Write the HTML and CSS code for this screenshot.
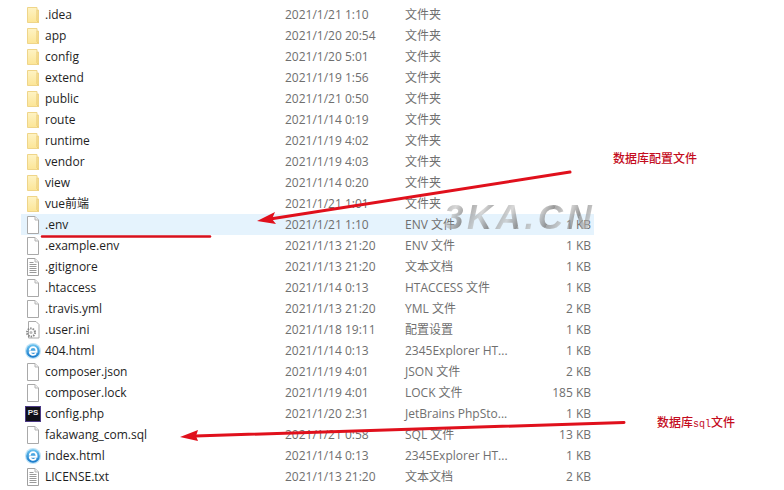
FILE: index.html
```html
<!DOCTYPE html>
<html lang="en">
<head>
  <meta charset="UTF-8">
  <title>Files</title>
  <link rel="stylesheet" href="styles.css">
</head>
<body>
  <!-- shared file icons -->
  <svg class="defs" width="0" height="0">
    <defs>
      <linearGradient id="folder-fill" x1="0" y1="0" x2="0" y2="1">
        <stop offset="0" stop-color="#fef3c4"/>
        <stop offset="1" stop-color="#fce596"/>
      </linearGradient>
      <linearGradient id="ie-fill" x1="0" y1="0" x2="0" y2="1">
        <stop offset="0" stop-color="#6cc4f0"/>
        <stop offset="1" stop-color="#1677c9"/>
      </linearGradient>
      <symbol id="folder" viewBox="0 0 16 18">
        <path d="M2.500 1.500h9.500v2.500h1.500v12.500h-11z" fill="url(#folder-fill)" stroke="#efd589"/>
        <path d="M12 4v10.500l1.500 2" fill="none" stroke="#e8c76c"/>
      </symbol>
      <symbol id="page" viewBox="0 0 16 18">
        <path d="M2.500 .5h7.500l3.500 3.500v13.500h-11z" fill="#fff" stroke="#a9a9a9"/>
        <path d="M10 .5v3.500h3.500" fill="#f1f1f1" stroke="#b5b5b5"/>
      </symbol>
      <symbol id="text-page" viewBox="0 0 16 18">
        <path d="M2.500 .5h7.500l3.500 3.500v13.500h-11z" fill="#fff" stroke="#a0a0a0"/>
        <path d="M10 .5v3.500h3.500" fill="#f1f1f1" stroke="#b5b5b5"/>
        <path d="M4.500 4.500h4M4.500 6.500h7M4.500 8.500h7M4.500 10.500h7M4.500 12.500h7M4.500 14.500h7" stroke="#999"/>
      </symbol>
      <symbol id="ini-page" viewBox="0 0 16 18">
        <path d="M3.500 .5h7.500l3 3v13.500h-10.500z" fill="#fff" stroke="#a9a9a9"/>
        <circle cx="6" cy="11.500" r="4" fill="none" stroke="#888" stroke-width="2" stroke-dasharray="1.500 1"/>
        <circle cx="6" cy="11.500" r="1.500" fill="#bbb"/>
      </symbol>
      <symbol id="ie" viewBox="0 0 16 16">
        <circle cx="8" cy="8" r="8" fill="#bfe3f7"/>
        <circle cx="8" cy="8" r="6.800" fill="url(#ie-fill)"/>
        <path d="M4.500 8.800h7v-1.300a3.400 3.400 0 0 0-6.800 0M4.700 8.500a3.400 3.400 0 0 0 6.300 1.700" fill="none" stroke="#fff" stroke-width="1.900"/>
      </symbol>
    </defs>
  </svg>

  <main class="list">
    <div class="row"><svg class="icon"><use href="#folder"/></svg><span class="name">.idea</span><span class="date">2021/1/21 1:10</span><span class="type">文件夹</span><span class="size"></span></div>
    <div class="row"><svg class="icon"><use href="#folder"/></svg><span class="name">app</span><span class="date">2021/1/20 20:54</span><span class="type">文件夹</span><span class="size"></span></div>
    <div class="row"><svg class="icon"><use href="#folder"/></svg><span class="name">config</span><span class="date">2021/1/20 5:01</span><span class="type">文件夹</span><span class="size"></span></div>
    <div class="row"><svg class="icon"><use href="#folder"/></svg><span class="name">extend</span><span class="date">2021/1/19 1:56</span><span class="type">文件夹</span><span class="size"></span></div>
    <div class="row"><svg class="icon"><use href="#folder"/></svg><span class="name">public</span><span class="date">2021/1/21 0:50</span><span class="type">文件夹</span><span class="size"></span></div>
    <div class="row"><svg class="icon"><use href="#folder"/></svg><span class="name">route</span><span class="date">2021/1/14 0:19</span><span class="type">文件夹</span><span class="size"></span></div>
    <div class="row"><svg class="icon"><use href="#folder"/></svg><span class="name">runtime</span><span class="date">2021/1/19 4:02</span><span class="type">文件夹</span><span class="size"></span></div>
    <div class="row"><svg class="icon"><use href="#folder"/></svg><span class="name">vendor</span><span class="date">2021/1/19 4:03</span><span class="type">文件夹</span><span class="size"></span></div>
    <div class="row"><svg class="icon"><use href="#folder"/></svg><span class="name">view</span><span class="date">2021/1/14 0:20</span><span class="type">文件夹</span><span class="size"></span></div>
    <div class="row"><svg class="icon"><use href="#folder"/></svg><span class="name">vue前端</span><span class="date">2021/1/21 1:01</span><span class="type">文件夹</span><span class="size"></span></div>
    <div class="row selected"><svg class="icon"><use href="#page"/></svg><span class="name">.env</span><span class="date">2021/1/21 1:10</span><span class="type">ENV 文件</span><span class="size">1 KB</span></div>
    <div class="row"><svg class="icon"><use href="#page"/></svg><span class="name">.example.env</span><span class="date">2021/1/13 21:20</span><span class="type">ENV 文件</span><span class="size">1 KB</span></div>
    <div class="row"><svg class="icon"><use href="#text-page"/></svg><span class="name">.gitignore</span><span class="date">2021/1/13 21:20</span><span class="type">文本文档</span><span class="size">1 KB</span></div>
    <div class="row"><svg class="icon"><use href="#page"/></svg><span class="name">.htaccess</span><span class="date">2021/1/14 0:13</span><span class="type">HTACCESS 文件</span><span class="size">1 KB</span></div>
    <div class="row"><svg class="icon"><use href="#page"/></svg><span class="name">.travis.yml</span><span class="date">2021/1/13 21:20</span><span class="type">YML 文件</span><span class="size">2 KB</span></div>
    <div class="row"><svg class="icon"><use href="#ini-page"/></svg><span class="name">.user.ini</span><span class="date">2021/1/18 19:11</span><span class="type">配置设置</span><span class="size">1 KB</span></div>
    <div class="row"><svg class="icon"><use href="#ie"/></svg><span class="name">404.html</span><span class="date">2021/1/14 0:13</span><span class="type">2345Explorer HT...</span><span class="size">1 KB</span></div>
    <div class="row"><svg class="icon"><use href="#page"/></svg><span class="name">composer.json</span><span class="date">2021/1/19 4:01</span><span class="type">JSON 文件</span><span class="size">2 KB</span></div>
    <div class="row"><svg class="icon"><use href="#page"/></svg><span class="name">composer.lock</span><span class="date">2021/1/19 4:01</span><span class="type">LOCK 文件</span><span class="size">185 KB</span></div>
    <div class="row"><span class="ps-icon">PS</span><span class="name">config.php</span><span class="date">2021/1/20 2:31</span><span class="type">JetBrains PhpSto...</span><span class="size">1 KB</span></div>
    <div class="row"><svg class="icon"><use href="#page"/></svg><span class="name">fakawang_com.sql</span><span class="date">2021/1/21 0:58</span><span class="type">SQL 文件</span><span class="size">13 KB</span></div>
    <div class="row"><svg class="icon"><use href="#ie"/></svg><span class="name">index.html</span><span class="date">2021/1/14 0:13</span><span class="type">2345Explorer HT...</span><span class="size">1 KB</span></div>
    <div class="row"><svg class="icon"><use href="#text-page"/></svg><span class="name">LICENSE.txt</span><span class="date">2021/1/13 21:20</span><span class="type">文本文档</span><span class="size">2 KB</span></div>
    <div class="row"><span class="cut-icon"></span></div>
  </main>

  <!-- annotations drawn over the list -->
  <div class="watermark">3KA.CN</div>
  <svg class="marks" width="784" height="490" viewBox="0 0 784 490">
    <path d="M570 172 L270 219" stroke="#e0101c" stroke-width="3" stroke-linecap="round" fill="none"/>
    <path d="M257 221 L275 212 L272 219 L276 224z" fill="#e0101c"/>
    <path d="M42 236.500 H210" stroke="#d8101c" stroke-width="2.500" stroke-linecap="round" fill="none"/>
    <path d="M624 422.500 L195 436" stroke="#e0101c" stroke-width="3" stroke-linecap="round" fill="none"/>
    <path d="M180 437 L198 430 L196 436 L198 441z" fill="#e0101c"/>
  </svg>
  <div class="note note-env">数据库配置文件</div>
  <div class="note note-sql">数据库<span class="latin">sql</span>文件</div>
</body>
</html>
```

FILE: styles.css
```css
/* Base */
* { box-sizing: border-box; }
html, body { margin: 0; height: 100%; }
body { position: relative; width: 784px; height: 490px; overflow: hidden; background: #fff; font-family: "Open Sans", "Noto Sans CJK SC", sans-serif; font-size: 12px; color: #1e1e1e; }
.defs { position: absolute; }

/* File list */
.list { display: flex; flex-direction: column; padding: 4px 0 0 21px; }
.row { display: grid; grid-template-columns: 16px 240px 120px 130px 1fr; align-items: center; width: 573px; height: 21px; padding: 0 3px 0 4px; flex: none; line-height: 21px; white-space: nowrap; }
.row.selected { background: #e5f3fd; }
.icon { width: 16px; height: 18px; }
.name { margin-left: 4px; }
.date, .type, .size { color: #6f6f6f; }
.date { margin-left: 4px; }
.type { margin-left: 4px; }
.size { text-align: right; }

.ps-icon { display: block; width: 16px; height: 16px; background: #0f0f18; border: 1px solid #4c3a86; color: #e8e8e8; font: bold 8px/12px "Liberation Sans", sans-serif; text-align: center; }
.cut-icon { display: block; width: 16px; height: 16px; background: #6b3fa8; }

/* Annotations */
.marks { position: absolute; left: 0; top: 0; }
.watermark { position: absolute; left: 444px; top: 199px; font: italic bold 35px/36px "Liberation Sans", sans-serif; letter-spacing: 3.5px; color: transparent; background: repeating-linear-gradient(115deg, rgba(140,140,140,0.75) 0, rgba(190,190,190,0.6) 14px, rgba(120,120,120,0.8) 26px); -webkit-background-clip: text; background-clip: text; }
.note { position: absolute; font-size: 12px; line-height: 16px; font-weight: 500; color: #c40d1e; font-family: "Noto Sans CJK SC", sans-serif; }
.note-env { left: 613px; top: 150px; }
.note-sql { left: 657px; top: 414px; }
.latin { font-family: "Liberation Mono", monospace; font-size: 10px; }
```
